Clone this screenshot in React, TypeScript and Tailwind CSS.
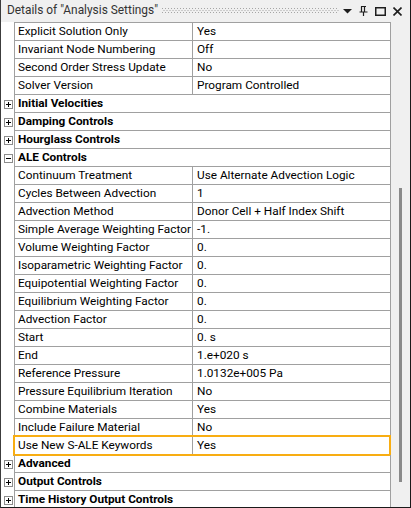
import React from "react";

type Row =
  | { kind: "prop"; name: string; value: string; highlight?: boolean }
  | { kind: "cat"; name: string; open?: boolean };

const rows: Row[] = [
  { kind: "prop", name: "Explicit Solution Only", value: "Yes" },
  { kind: "prop", name: "Invariant Node Numbering", value: "Off" },
  { kind: "prop", name: "Second Order Stress Update", value: "No" },
  { kind: "prop", name: "Solver Version", value: "Program Controlled" },
  { kind: "cat", name: "Initial Velocities" },
  { kind: "cat", name: "Damping Controls" },
  { kind: "cat", name: "Hourglass Controls" },
  { kind: "cat", name: "ALE Controls", open: true },
  { kind: "prop", name: "Continuum Treatment", value: "Use Alternate Advection Logic" },
  { kind: "prop", name: "Cycles Between Advection", value: "1" },
  { kind: "prop", name: "Advection Method", value: "Donor Cell + Half Index Shift" },
  { kind: "prop", name: "Simple Average Weighting Factor", value: "-1." },
  { kind: "prop", name: "Volume Weighting Factor", value: "0." },
  { kind: "prop", name: "Isoparametric Weighting Factor", value: "0." },
  { kind: "prop", name: "Equipotential Weighting Factor", value: "0." },
  { kind: "prop", name: "Equilibrium Weighting Factor", value: "0." },
  { kind: "prop", name: "Advection Factor", value: "0." },
  { kind: "prop", name: "Start", value: "0. s" },
  { kind: "prop", name: "End", value: "1.e+020 s" },
  { kind: "prop", name: "Reference Pressure", value: "1.0132e+005 Pa" },
  { kind: "prop", name: "Pressure Equilibrium Iteration", value: "No" },
  { kind: "prop", name: "Combine Materials", value: "Yes" },
  { kind: "prop", name: "Include Failure Material", value: "No" },
  { kind: "prop", name: "Use New S-ALE Keywords", value: "Yes", highlight: true },
  { kind: "cat", name: "Advanced" },
  { kind: "cat", name: "Output Controls" },
  { kind: "cat", name: "Time History Output Controls" },
];

function ExpandBox({ open }: { open?: boolean }) {
  return (
    <svg width="9" height="9" viewBox="0 0 9 9" className="block">
      <rect x="0.5" y="0.5" width="8" height="8" fill="#ffffff" stroke="#8c8c8c" />
      <line x1="2" y1="4.5" x2="7" y2="4.5" stroke="#000" strokeWidth="1" />
      {!open && <line x1="4.5" y1="2" x2="4.5" y2="7" stroke="#000" strokeWidth="1" />}
    </svg>
  );
}

export default function App() {
  return (
    <div className="w-[411px] h-[508px] overflow-hidden bg-white flex flex-col font-['Roboto',sans-serif] text-[11.8px] text-black border-l border-r border-b border-[#1a1a1a] border-l-[#3c3c3c]">
      {/* Title bar */}
      <div className="h-[22px] shrink-0 bg-[#f0f0f0] flex items-center pl-[6px] pr-[8px]">
        <span className="text-[#333333] whitespace-nowrap leading-none text-[11.9px]">Details of "Analysis Settings"</span>
        <svg className="ml-[4px] flex-1 h-[6px]" preserveAspectRatio="none">
          <defs>
            <pattern id="grip" width="3" height="4" patternUnits="userSpaceOnUse">
              <rect x="0" y="0" width="1" height="1" fill="#a6a6a6" />
              <rect x="1.5" y="2" width="1" height="1" fill="#a6a6a6" />
            </pattern>
          </defs>
          <rect x="0" y="0" width="100%" height="6" fill="url(#grip)" />
        </svg>
        <div className="flex items-center ml-[4px] gap-[7px]">
          <svg width="9" height="5" viewBox="0 0 9 5">
            <polygon points="0,0 9,0 4.5,4.5" fill="#1e1e1e" />
          </svg>
          <svg width="9" height="10" viewBox="0 0 9 10">
            <path d="M2 0.5 H7 M2.5 0.5 V6 M5.5 0.5 V6 M0.5 6 H8.5 M4.5 6 V10" stroke="#1e1e1e" strokeWidth="1.2" fill="none" />
          </svg>
          <svg width="11" height="9" viewBox="0 0 11 9">
            <rect x="0.75" y="0.75" width="9.5" height="7.5" stroke="#1e1e1e" strokeWidth="1.5" fill="none" />
          </svg>
          <svg width="9" height="9" viewBox="0 0 9 9">
            <path d="M0.5 0.5 L8.5 8.5 M8.5 0.5 L0.5 8.5" stroke="#1e1e1e" strokeWidth="1.6" />
          </svg>
        </div>
      </div>
      {/* Body */}
      <div className="flex flex-1 min-h-0">
        <div className="flex flex-col w-[390px] shrink-0">
          <div className="flex h-[1px] shrink-0">
            <div className="w-[13px] bg-white" />
            <div className="flex-1 bg-[#a0a0a0]" />
          </div>
          {rows.map((r, i) => (
            <div key={i} className="flex h-[18px] shrink-0 relative">
              <div className="w-[13px] shrink-0 flex items-center justify-end pr-[1px]">
                {r.kind === "cat" && <ExpandBox open={r.open} />}
              </div>
              <div className="flex-1 flex border-l border-r border-b border-[#a0a0a0] h-[18px]">
                {r.kind === "cat" ? (
                  <div className="flex-1 flex items-center pl-[3px] font-bold whitespace-nowrap">{r.name}</div>
                ) : (
                  <>
                    <div className="w-[178px] shrink-0 border-r border-[#a0a0a0] flex items-center pl-[3px] whitespace-nowrap overflow-hidden">
                      {r.name}
                    </div>
                    <div className="flex-1 flex items-center pl-[4px] whitespace-nowrap overflow-hidden">{r.value}</div>
                  </>
                )}
              </div>
              {r.kind === "prop" && r.highlight && (
                <div className="absolute left-[12px] right-[0px] top-[-2px] h-[21px] border-2 border-[#f8ad12] pointer-events-none" />
              )}
            </div>
          ))}
        </div>
        <div className="flex-1 bg-[#f0f0f0] flex flex-col items-center">
          <div className="mt-[166px] w-[3px] h-[294px] bg-[#8a8a8a] ml-[-1px]" />
        </div>
      </div>
    </div>
  );
}
